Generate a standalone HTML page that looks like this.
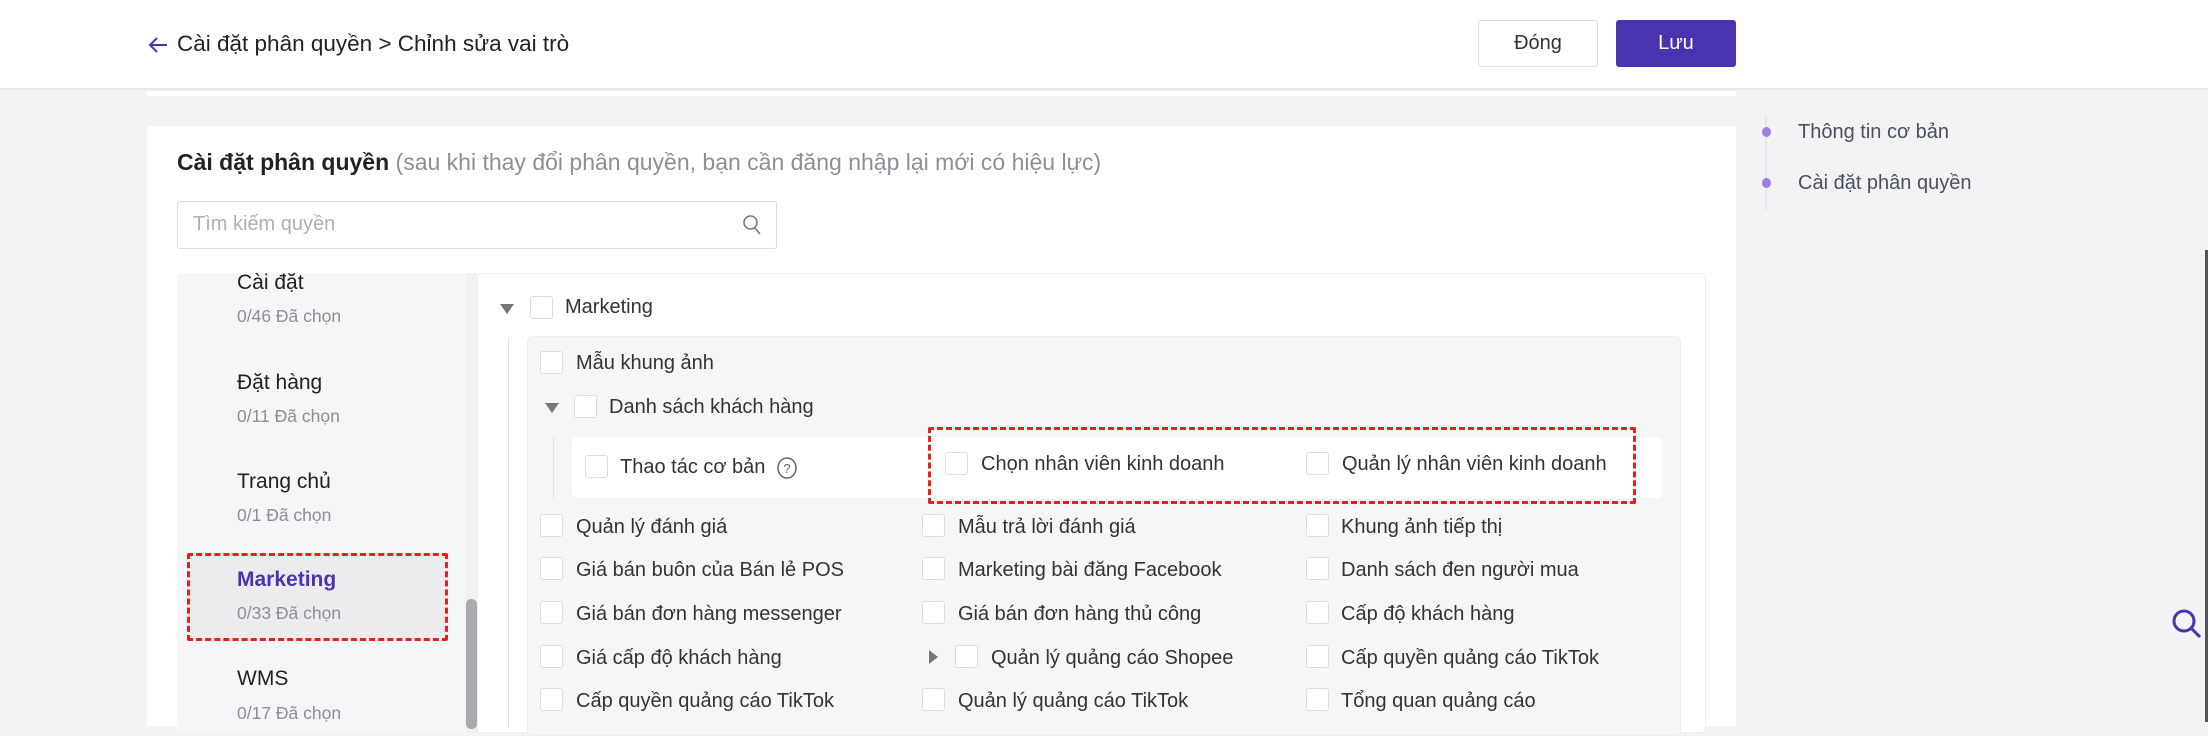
<!DOCTYPE html>
<html><head><meta charset="utf-8"><style>
*{margin:0;padding:0;box-sizing:border-box}
body{width:2208px;height:722px;overflow:hidden;background:#f2f3f5;font-family:"Liberation Sans","DejaVu Sans",sans-serif;color:#333;position:relative}
.a{position:absolute;white-space:nowrap}
.cb{position:absolute;width:23px;height:23px;background:#fff;border:1px solid #dcdde0;border-radius:3px}
.t{position:absolute;white-space:nowrap;font-size:20px;color:#333;line-height:24px}
.tri{position:absolute;width:0;height:0;border-left:7px solid transparent;border-right:7px solid transparent;border-top:10px solid #777}
.trr{position:absolute;width:0;height:0;border-top:7px solid transparent;border-bottom:7px solid transparent;border-left:9px solid #777}
.it{position:absolute;left:237px;font-size:21px;color:#222}
.sub{position:absolute;left:237px;font-size:17.5px;color:#8a8f99}
</style></head><body>
<div class="a" style="left:0;top:0;width:2208px;height:90px;background:#fff;border-bottom:2px solid #e8e9ec"></div>
<svg class="a" style="left:147px;top:35px" width="22" height="20" viewBox="0 0 22 20"><path d="M20 10H3M10 3L3 10L10 17" stroke="#4a33b0" stroke-width="2" fill="none"/></svg>
<div class="a" style="left:177px;top:30px;font-size:22.5px;color:#222;line-height:28px">Cài đặt phân quyền &gt; Chỉnh sửa vai trò</div>
<div class="a" style="left:1478px;top:20px;width:120px;height:47px;border:1px solid #dcdde0;border-radius:3px;background:#fff;text-align:center;line-height:45px;font-size:20px;color:#333">Đóng</div>
<div class="a" style="left:1616px;top:20px;width:120px;height:47px;border-radius:3px;background:#4a33b0;text-align:center;line-height:47px;font-size:20px;color:#fff">Lưu</div>
<div class="a" style="left:147px;top:91px;width:1589px;height:5px;background:#fff"></div>
<div class="a" style="left:147px;top:126px;width:1589px;height:600px;background:#fff"></div>
<!-- right nav -->
<div class="a" style="left:1765px;top:116px;width:2px;height:94px;background:#e6e7ea"></div>
<div class="a" style="left:1762px;top:127px;width:9px;height:10px;border-radius:50%;background:#a07ee0"></div>
<div class="a" style="left:1762px;top:178px;width:9px;height:10px;border-radius:50%;background:#a07ee0"></div>
<div class="a" style="left:1798px;top:121px;font-size:20px;color:#4a5060">Thông tin cơ bản</div>
<div class="a" style="left:1798px;top:172px;font-size:20px;color:#4a5060">Cài đặt phân quyền</div>
<div class="a" style="left:2205px;top:250px;width:3px;height:472px;background:#555"></div>
<svg class="a" style="left:2170px;top:607px" width="34" height="34" viewBox="0 0 34 34"><circle cx="14" cy="14" r="10" stroke="#4a33b0" stroke-width="3" fill="none"/><path d="M21 21L30 30" stroke="#4a33b0" stroke-width="3"/></svg>
<!-- title -->
<div class="a" style="left:177px;top:148px;font-size:23px;line-height:28px"><b style="color:#222">Cài đặt phân quyền</b> <span style="color:#8a8f99">(sau khi thay đổi phân quyền, bạn cần đăng nhập lại mới có hiệu lực)</span></div>
<div class="a" style="left:177px;top:201px;width:600px;height:48px;border:1px solid #dcdde0;border-radius:3px"></div>
<div class="a" style="left:193px;top:213px;font-size:20px;color:#aab0b8">Tìm kiếm quyền</div>
<svg class="a" style="left:742px;top:214px" width="20" height="22" viewBox="0 0 20 22"><circle cx="8.5" cy="8.5" r="6.5" stroke="#777" stroke-width="1.6" fill="none"/><path d="M13 14L18 20" stroke="#777" stroke-width="1.6"/></svg>
<!-- left list -->
<div class="a" style="left:177px;top:273px;width:300px;height:460px;background:#f5f6f8;border-radius:4px 0 0 0"></div>
<div class="a" style="left:466px;top:273px;width:11px;height:460px;background:#f0f1f3"></div>
<div class="a" style="left:466px;top:599px;width:11px;height:130px;background:#a9abb0;border-radius:5px"></div>
<div class="a" style="left:187px;top:553px;width:261px;height:88px;background:#ececee;border:3px dashed #e8201b;border-radius:2px"></div>
<div class="it" style="top:271px">Cài đặt</div><div class="sub" style="top:306px">0/46 Đã chọn</div>
<div class="it" style="top:371px">Đặt hàng</div><div class="sub" style="top:406px">0/11 Đã chọn</div>
<div class="it" style="top:470px">Trang chủ</div><div class="sub" style="top:505px">0/1 Đã chọn</div>
<div class="it" style="top:568px;color:#4a33b0;font-weight:bold">Marketing</div><div class="sub" style="top:603px">0/33 Đã chọn</div>
<div class="it" style="top:667px">WMS</div><div class="sub" style="top:703px">0/17 Đã chọn</div>
<!-- tree -->
<div class="a" style="left:477px;top:273px;width:1229px;height:460px;border:1px solid #eceef0;border-radius:4px;background:#fff"></div>
<div class="tri" style="left:500px;top:304px"></div>
<div class="cb" style="left:530px;top:296px"></div>
<div class="t" style="left:565px;top:295px">Marketing</div>
<div class="a" style="left:508px;top:338px;width:1px;height:390px;background:#e4e5e8"></div>
<div class="a" style="left:527px;top:336px;width:1154px;height:400px;background:#f5f6f8;border:1px solid #eceef0;border-radius:5px"></div>
<div class="cb" style="left:540px;top:351px"></div><div class="t" style="left:576px;top:351px">Mẫu khung ảnh</div>
<div class="tri" style="left:545px;top:403px"></div>
<div class="cb" style="left:574px;top:395px"></div><div class="t" style="left:609px;top:395px">Danh sách khách hàng</div>
<div class="a" style="left:553px;top:437px;width:1px;height:61px;background:#e0e1e4"></div>
<div class="a" style="left:572px;top:437px;width:1090px;height:61px;background:#fff;border-radius:5px"></div>
<div class="cb" style="left:585px;top:455px"></div><div class="t" style="left:620px;top:455px">Thao tác cơ bản</div>
<svg class="a" style="left:776px;top:456px" width="22" height="24" viewBox="0 0 22 24"><ellipse cx="11" cy="12" rx="9" ry="10" stroke="#666" stroke-width="1.5" fill="none"/><text x="11" y="17" font-size="13" text-anchor="middle" fill="#666" font-family="Liberation Sans">?</text></svg>
<div class="a" style="left:928px;top:427px;width:708px;height:77px;border:3px dashed #e8201b;border-radius:2px"></div>
<div class="cb" style="left:945px;top:452px"></div><div class="t" style="left:981px;top:452px">Chọn nhân viên kinh doanh</div>
<div class="cb" style="left:1306px;top:452px"></div><div class="t" style="left:1342px;top:452px">Quản lý nhân viên kinh doanh</div>
<!-- grid -->
<div class="cb" style="left:540px;top:514px"></div><div class="t" style="left:576px;top:515px">Quản lý đánh giá</div>
<div class="cb" style="left:922px;top:514px"></div><div class="t" style="left:958px;top:515px">Mẫu trả lời đánh giá</div>
<div class="cb" style="left:1306px;top:514px"></div><div class="t" style="left:1341px;top:515px">Khung ảnh tiếp thị</div>
<div class="cb" style="left:540px;top:557px"></div><div class="t" style="left:576px;top:558px">Giá bán buôn của Bán lẻ POS</div>
<div class="cb" style="left:922px;top:557px"></div><div class="t" style="left:958px;top:558px">Marketing bài đăng Facebook</div>
<div class="cb" style="left:1306px;top:557px"></div><div class="t" style="left:1341px;top:558px">Danh sách đen người mua</div>
<div class="cb" style="left:540px;top:601px"></div><div class="t" style="left:576px;top:602px">Giá bán đơn hàng messenger</div>
<div class="cb" style="left:922px;top:601px"></div><div class="t" style="left:958px;top:602px">Giá bán đơn hàng thủ công</div>
<div class="cb" style="left:1306px;top:601px"></div><div class="t" style="left:1341px;top:602px">Cấp độ khách hàng</div>
<div class="cb" style="left:540px;top:645px"></div><div class="t" style="left:576px;top:646px">Giá cấp độ khách hàng</div>
<div class="trr" style="left:929px;top:650px"></div>
<div class="cb" style="left:955px;top:645px"></div><div class="t" style="left:991px;top:646px">Quản lý quảng cáo Shopee</div>
<div class="cb" style="left:1306px;top:645px"></div><div class="t" style="left:1341px;top:646px">Cấp quyền quảng cáo TikTok</div>
<div class="cb" style="left:540px;top:688px"></div><div class="t" style="left:576px;top:689px">Cấp quyền quảng cáo TikTok</div>
<div class="cb" style="left:922px;top:688px"></div><div class="t" style="left:958px;top:689px">Quản lý quảng cáo TikTok</div>
<div class="cb" style="left:1306px;top:688px"></div><div class="t" style="left:1341px;top:689px">Tổng quan quảng cáo</div>
</body></html>
